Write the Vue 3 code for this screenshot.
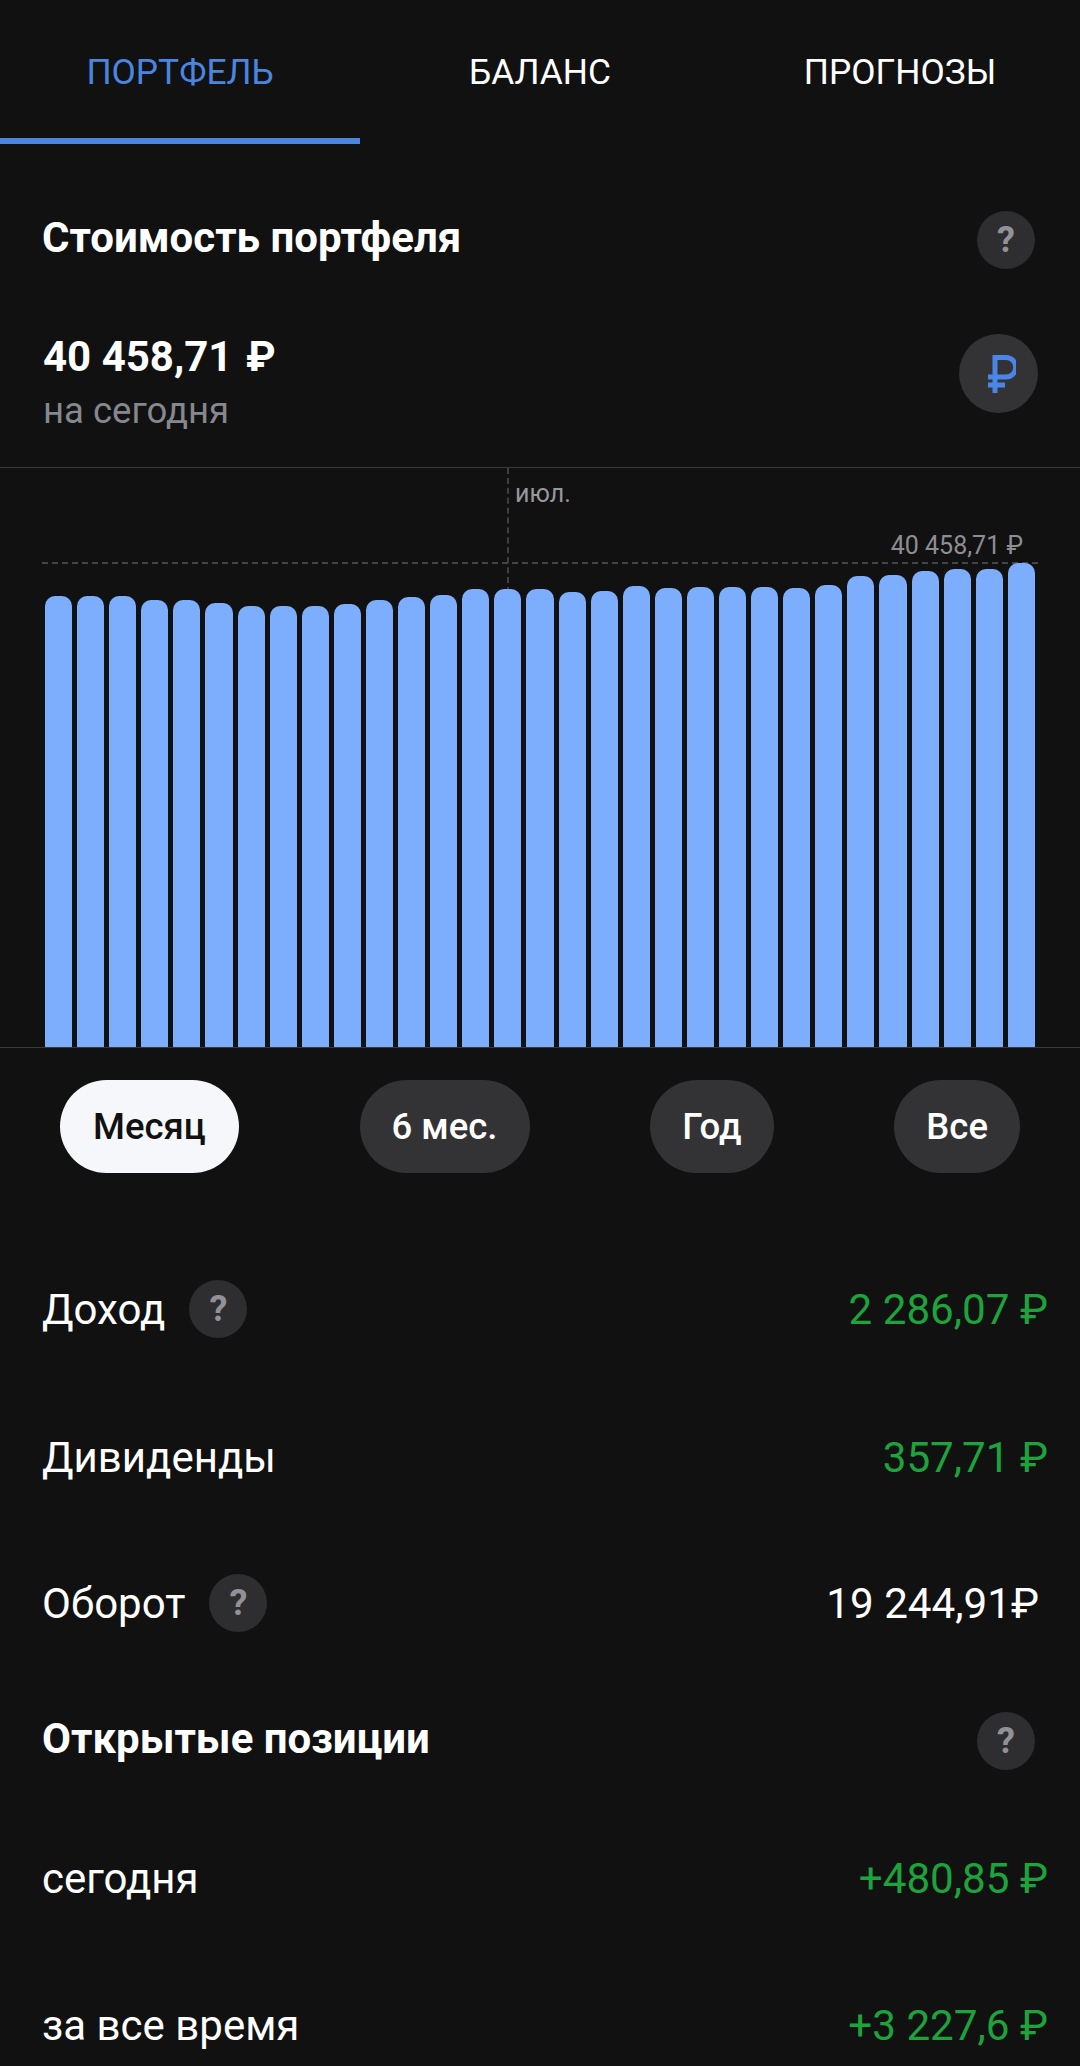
<script setup>
const tabs = ["ПОРТФЕЛЬ", "БАЛАНС", "ПРОГНОЗЫ"];
const periods = ["Месяц", "6 мес.", "Год", "Все"];

// bar tops read from the reference, in px from the chart bottom
const barHeights = [
  451, 451, 451, 447, 447, 444, 441, 441, 441, 443, 447, 450, 452, 458, 458, 458,
  455, 456, 461, 459, 460, 460, 460, 459, 462, 471, 472, 476, 478, 478, 484,
];
</script>

<template>
  <div class="page">
    <nav class="tabs">
      <div v-for="(tab, i) in tabs" :key="tab" class="tab" :class="{ active: i === 0 }">{{ tab }}</div>
    </nav>

    <section class="head-row">
      <h2 class="title">Стоимость портфеля</h2>
      <span class="help">?</span>
    </section>

    <section class="value-row">
      <div>
        <div class="value">40 458,71 <span class="value-cur">₽</span></div>
        <div class="value-note">на сегодня</div>
      </div>
      <span class="currency">
        <svg width="28" height="38" viewBox="0 0 28 38" fill="none" stroke="#4a86e8" stroke-width="5">
          <path d="M7 38V2.5h11a9.75 9.75 0 0 1 0 19.5H0" />
          <path d="M0 30h17" />
        </svg>
      </span>
    </section>

    <section class="chart">
      <div class="grid-v"></div>
      <div class="grid-h"></div>
      <span class="month">июл.</span>
      <span class="max">40 458,71 ₽</span>
      <div class="bars">
        <div v-for="(h, i) in barHeights" :key="i" class="bar" :style="{ height: h + 'px' }"></div>
      </div>
    </section>

    <div class="periods">
      <button v-for="(p, i) in periods" :key="p" type="button" class="period" :class="{ active: i === 0 }">{{ p }}</button>
    </div>

    <div class="row row-income">
      <div class="label">Доход <span class="help">?</span></div>
      <div class="amount green">2 286,07 ₽</div>
    </div>
    <div class="row row-div">
      <div class="label">Дивиденды</div>
      <div class="amount green">357,71 ₽</div>
    </div>
    <div class="row row-turn">
      <div class="label">Оборот <span class="help">?</span></div>
      <div class="amount turnover">19 244,91₽</div>
    </div>

    <section class="head-row head-open">
      <h2 class="title">Открытые позиции</h2>
      <span class="help">?</span>
    </section>

    <div class="row row-today">
      <div class="label">сегодня</div>
      <div class="amount green">+480,85 ₽</div>
    </div>
    <div class="row row-all">
      <div class="label">за все время</div>
      <div class="amount green">+3 227,6 ₽</div>
    </div>
  </div>
</template>

<style>
html, body {
  background: #111112;
}
</style>

<style scoped>
.page {
  width: 1080px;
  height: 2066px;
  overflow: hidden;
  background: #111112;
  font-family: Roboto, "Noto Sans", sans-serif;
  color: #fff;
}

.tabs {
  display: flex;
  height: 144px;
}

.tab {
  flex: 1;
  padding-top: 52px;
  text-align: center;
  font-size: 35.3px;
  line-height: 40px;
  box-sizing: border-box;
}

.tab.active {
  color: #4a86e0;
  border-bottom: 6px solid #4a86e0;
}

.head-row {
  display: flex;
  justify-content: space-between;
  align-items: center;
  height: 58px;
  margin-top: 67px;
  padding: 0 45px 0 42px;
}

.title {
  margin: 0 0 6px;
  font-size: 42px;
  font-weight: 700;
}

.help {
  display: inline-flex;
  align-items: center;
  justify-content: center;
  width: 58px;
  height: 58px;
  border-radius: 50%;
  background: #2e2e30;
  color: #929296;
  font-size: 36px;
  font-weight: 700;
}

.value-row {
  display: flex;
  justify-content: space-between;
  align-items: flex-start;
  height: 98px;
  margin-top: 64px;
  padding: 0 42px 0 43px;
}

.value {
  font-size: 42px;
  line-height: 48px;
  font-weight: 700;
}

.value-cur {
  margin-left: 3px;
}

.value-note {
  margin-top: 10px;
  font-size: 36.5px;
  line-height: 40px;
  color: #85888e;
}

.currency {
  display: flex;
  align-items: center;
  justify-content: center;
  width: 79px;
  height: 79px;
  margin-top: 1px;
  border-radius: 50%;
  background: #333335;
}

.currency svg {
  margin-left: 7px;
}

.chart {
  position: relative;
  height: 579px;
  margin-top: 36px;
  border-top: 1px solid #38383a;
  border-bottom: 1px solid #38383a;
}

.grid-v {
  position: absolute;
  left: 507px;
  top: 0;
  height: 125px;
  border-left: 2px dashed #3f3f41;
}

.grid-h {
  position: absolute;
  left: 42px;
  top: 94px;
  width: 996px;
  border-top: 2px dashed #444446;
}

.month {
  position: absolute;
  left: 515px;
  top: 11px;
  font-size: 25px;
  line-height: 30px;
  color: #98989c;
}

.max {
  position: absolute;
  right: 57px;
  top: 63px;
  font-size: 25px;
  line-height: 30px;
  color: #8e8e92;
}

.bars {
  position: absolute;
  left: 45px;
  right: 45px;
  bottom: 0;
  display: flex;
  align-items: flex-end;
  gap: 5px;
}

.bar {
  flex: 1;
  background: #7daefd;
  border-radius: 10px 10px 0 0;
}

.periods {
  display: flex;
  justify-content: space-between;
  margin-top: 32px;
  padding: 0 60px;
}

.period {
  height: 93px;
  padding: 0 32px;
  border: 0;
  border-radius: 47px;
  background: #333335;
  color: #fff;
  font-family: inherit;
  font-size: 36.5px;
  font-weight: 500;
}

.period.active {
  padding: 0 33px;
  background: #f5f7fa;
  color: #111112;
}

.row {
  display: flex;
  justify-content: space-between;
  align-items: center;
  height: 58px;
  padding: 0 32px 0 42px;
}

.row-income { margin-top: 107px; }
.row-div { margin-top: 90px; }
.row-turn { margin-top: 88px; }
.row-today { margin-top: 79px; }
.row-all { margin-top: 89px; }

.head-open { margin-top: 80px; }

.label {
  display: flex;
  align-items: center;
  gap: 24px;
  font-size: 42px;
}

.amount {
  font-size: 42.2px;
}

.green {
  color: #1ea33c;
}

.turnover {
  margin-right: 9px;
}
</style>
